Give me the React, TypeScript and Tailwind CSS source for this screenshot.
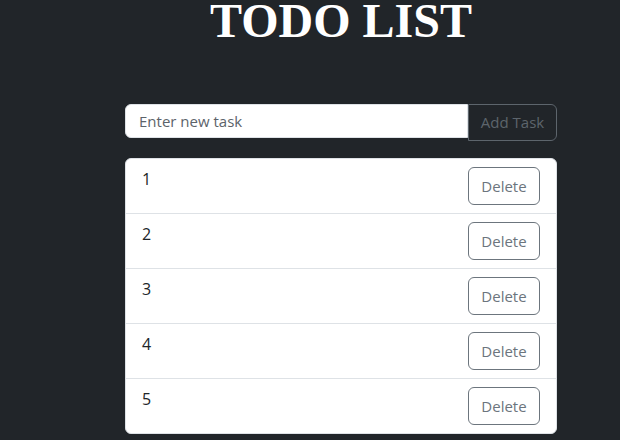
import React, { useState } from "react";

const initialTasks = ["1", "2", "3", "4", "5"];

export default function App() {
  const [tasks, setTasks] = useState<string[]>(initialTasks);
  const [text, setText] = useState("");

  const addTask = () => {
    if (!text.trim()) return;
    setTasks([...tasks, text.trim()]);
    setText("");
  };

  return (
    <div className="h-[440px] overflow-hidden bg-[#212529] font-['Open_Sans',sans-serif]">
      <div className="ml-[125px] w-[432px]">
        <h1 className="text-center font-['Liberation_Serif',serif] text-[48px] font-bold leading-[42px] text-white">
          TODO LIST
        </h1>

        {/* input row */}
        <div className="mt-[62px] flex items-start">
          <input
            value={text}
            onChange={(e) => setText(e.target.value)}
            placeholder="Enter new task"
            className="h-[34px] flex-1 rounded-l-[6px] border border-[#dee2e6] bg-white px-[13px] text-[15px] text-[#212529] outline-none placeholder:text-[#5c636a]"
          />
          <button
            onClick={addTask}
            className="h-[37px] w-[89px] rounded-r-[6px] border border-[#6c757d] bg-[#212529] text-[15px] text-[#6c757d] opacity-80"
          >
            Add Task
          </button>
        </div>

        {/* list */}
        <ul className="mt-[17px] overflow-hidden rounded-[6px] border border-[#dee2e6] bg-white">
          {tasks.map((t, i) => (
            <li
              key={i}
              className="flex items-start justify-between border-b border-[#dee2e6] py-[8px] pl-[16px] pr-[16px] last:border-b-0"
            >
              <span className="text-[16px] leading-[24px] text-[#212529]">{t}</span>
              <button
                onClick={() => setTasks(tasks.filter((_, j) => j !== i))}
                className="h-[38px] w-[72px] rounded-[6px] border border-[#6c757d] bg-white text-[15px] text-[#6c757d]"
              >
                Delete
              </button>
            </li>
          ))}
        </ul>
      </div>
    </div>
  );
}
